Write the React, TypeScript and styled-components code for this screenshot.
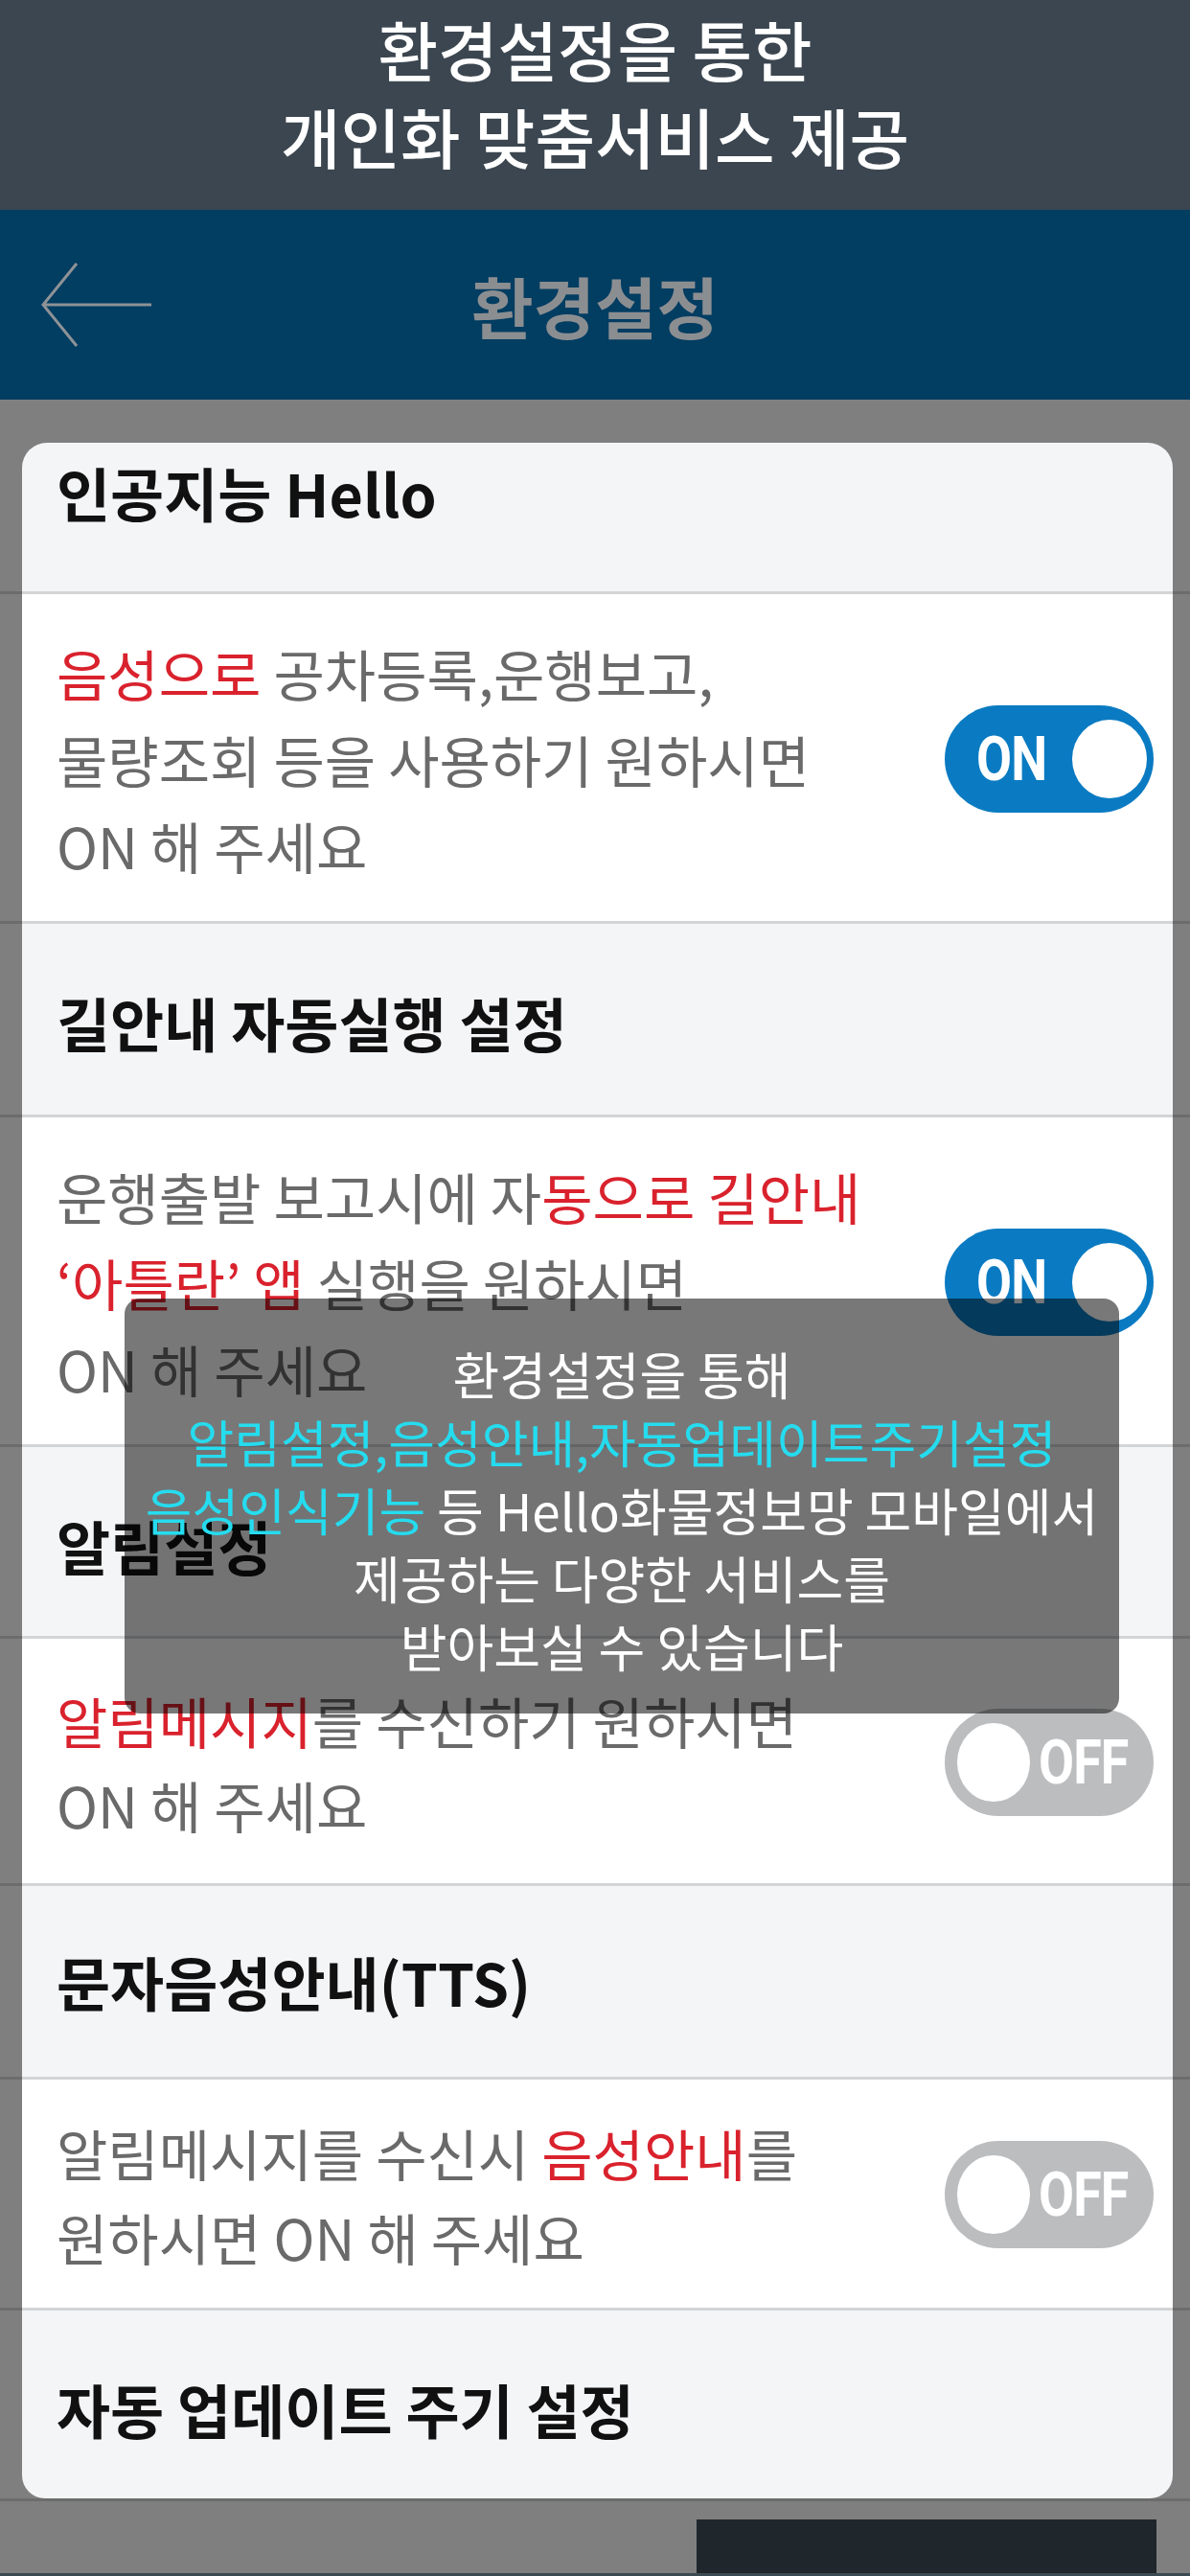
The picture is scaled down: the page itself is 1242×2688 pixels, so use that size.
import styled, { createGlobalStyle } from "styled-components";

const GlobalStyle = createGlobalStyle`
  body {
    margin: 0;
    background: #7f7f7f;
    font-family: "Noto Sans CJK KR", "Noto Sans", sans-serif;
  }
`;

const Page = styled.div`
  width: 1242px;
  height: 2688px;
  background: #7f7f7f;
  position: relative;
  overflow: hidden;
  display: flex;
  flex-direction: column;
`;

const Banner = styled.div`
  height: 219px;
  box-sizing: border-box;
  padding-top: 5px;
  background: #3b4650;
  color: #ffffff;
  font-size: 68px;
  font-weight: 500;
  line-height: 91px;
  text-align: center;
`;

const NavBar = styled.div`
  height: 198px;
  background: #023d62;
  display: grid;
  grid-template-columns: 1fr auto 1fr;
  align-items: center;
`;

const BackButton = styled.div`
  padding-left: 42px;
  display: flex;
  align-items: center;
`;

const NavTitle = styled.div`
  font-size: 70px;
  font-weight: 700;
  color: #8b8e91;
`;

const Card = styled.div`
  margin: 45px 18px 0 23px;
  display: flex;
  flex-direction: column;
`;

const Block = styled.div<{ $first?: boolean; $last?: boolean }>`
  position: relative;
  border-top: ${(p) => (p.$first ? "none" : "3px solid #d3d4d6")};
  border-radius: ${(p) => (p.$first ? "26px 26px 0 0" : p.$last ? "0 0 24px 24px" : "0")};

  &::before,
  &::after {
    content: "";
    display: ${(p) => (p.$first ? "none" : "block")};
    position: absolute;
    top: -3px;
    height: 3px;
    background: #6c6c6c;
  }
  &::before {
    left: -23px;
    width: 23px;
  }
  &::after {
    right: -18px;
    width: 18px;
  }
`;

const SectionHead = styled(Block)<{ $h: number; $top: number }>`
  height: ${(p) => p.$h}px;
  box-sizing: border-box;
  padding: ${(p) => p.$top}px 36px 0;
  background: #f4f5f7;
`;

const SectionTitle = styled.div`
  font-size: 61px;
  font-weight: 700;
  line-height: 70px;
  color: #111111;
`;

const OptionRow = styled(Block)<{ $pt: number; $pb: number }>`
  background: #ffffff;
  padding: ${(p) => p.$pt}px 20px ${(p) => p.$pb}px 36px;
  display: flex;
  align-items: center;
  justify-content: space-between;
`;

const Desc = styled.div<{ $lh: number }>`
  font-size: 58px;
  line-height: ${(p) => p.$lh}px;
  color: #6a6a6a;
  white-space: nowrap;
`;

const Red = styled.span`
  color: #d9222d;
`;

const Switch = styled.div<{ $on: boolean }>`
  width: 218px;
  height: 112px;
  border-radius: 56px;
  box-sizing: border-box;
  background: ${(p) => (p.$on ? "#0a7bc2" : "#bcbdbf")};
  display: flex;
  flex-direction: ${(p) => (p.$on ? "row" : "row-reverse")};
  align-items: center;
  justify-content: space-between;
  padding: ${(p) => (p.$on ? "0 7px 0 26px" : "0 18px 0 13px")};
  flex-shrink: 0;
`;

const SwitchLabel = styled.span`
  font-family: Roboto, "Liberation Sans", sans-serif;
  font-size: 64px;
  font-weight: 700;
  color: #ffffff;
  transform: scaleX(0.84);
  letter-spacing: -1px;
`;

const Knob = styled.div`
  width: 78px;
  height: 82px;
  border-radius: 50%;
  background: #ffffff;
`;

const BackLine = styled.div`
  height: 3px;
  background: #6c6c6c;
`;

const Footer = styled.div`
  flex: 1;
  display: flex;
  justify-content: flex-end;
  padding: 19px 35px 0 0;
  border-bottom: 3px solid #3c4a53;
`;

const DarkButton = styled.div`
  width: 480px;
  background: #1f262c;
`;

const Toast = styled.div`
  position: absolute;
  left: 130px;
  top: 1355px;
  width: 1038px;
  box-sizing: border-box;
  padding: 43px 0 35px;
  background: rgba(0, 0, 0, 0.53);
  border-radius: 16px;
  color: #ffffff;
  font-size: 53px;
  line-height: 71px;
  text-align: center;
  white-space: nowrap;
`;

const Cyan = styled.span`
  color: #25dcef;
`;

function Toggle({ on }: { on: boolean }) {
  return (
    <Switch $on={on}>
      <SwitchLabel>{on ? "ON" : "OFF"}</SwitchLabel>
      <Knob />
    </Switch>
  );
}

function BackArrow() {
  return (
    <svg width="120" height="92" viewBox="0 0 120 92">
      <path d="M3 46 H116 M38 3 L3 46 L38 89" fill="none" stroke="#8e9296" strokeWidth="3" />
    </svg>
  );
}

export default function App() {
  return (
    <Page>
      <GlobalStyle />
      <Banner>
        환경설정을 통한
        <br />
        개인화 맞춤서비스 제공
      </Banner>
      <NavBar>
        <BackButton>
          <BackArrow />
        </BackButton>
        <NavTitle>환경설정</NavTitle>
        <div />
      </NavBar>

      <Card>
        <SectionHead $first $h={155} $top={17}>
          <SectionTitle>인공지능 Hello</SectionTitle>
        </SectionHead>
        <OptionRow $pt={37} $pb={34}>
          <Desc $lh={90}>
            <Red>음성으로</Red> 공차등록,운행보고,
            <br />
            물량조회 등을 사용하기 원하시면
            <br />
            ON 해 주세요
          </Desc>
          <Toggle on />
        </OptionRow>

        <SectionHead $h={202} $top={68}>
          <SectionTitle>길안내 자동실행 설정</SectionTitle>
        </SectionHead>
        <OptionRow $pt={37} $pb={34}>
          <Desc $lh={90}>
            운행출발 보고시에 자<Red>동으로 길안내</Red>
            <br />
            <Red>‘아틀란’ 앱</Red> 실행을 원하시면
            <br />
            ON 해 주세요
          </Desc>
          <Toggle on />
        </OptionRow>

        <SectionHead $h={200} $top={68}>
          <SectionTitle>알림설정</SectionTitle>
        </SectionHead>
        <OptionRow $pt={41} $pb={38}>
          <Desc $lh={88}>
            <Red>알림메시지</Red>를 수신하기 원하시면
            <br />
            ON 해 주세요
          </Desc>
          <Toggle on={false} />
        </OptionRow>

        <SectionHead $h={202} $top={65}>
          <SectionTitle>문자음성안내(TTS)</SectionTitle>
        </SectionHead>
        <OptionRow $pt={32} $pb={30}>
          <Desc $lh={88}>
            알림메시지를 수신시 <Red>음성안내</Red>를
            <br />
            원하시면 ON 해 주세요
          </Desc>
          <Toggle on={false} />
        </OptionRow>

        <SectionHead $last $h={199} $top={68}>
          <SectionTitle>자동 업데이트 주기 설정</SectionTitle>
        </SectionHead>
      </Card>
      <BackLine />
      <Footer>
        <DarkButton />
      </Footer>

      <Toast>
        환경설정을 통해
        <br />
        <Cyan>알림설정,음성안내,자동업데이트주기설정</Cyan>
        <br />
        <Cyan>음성인식기능</Cyan> 등 Hello화물정보망 모바일에서
        <br />
        제공하는 다양한 서비스를
        <br />
        받아보실 수 있습니다
      </Toast>
    </Page>
  );
}
